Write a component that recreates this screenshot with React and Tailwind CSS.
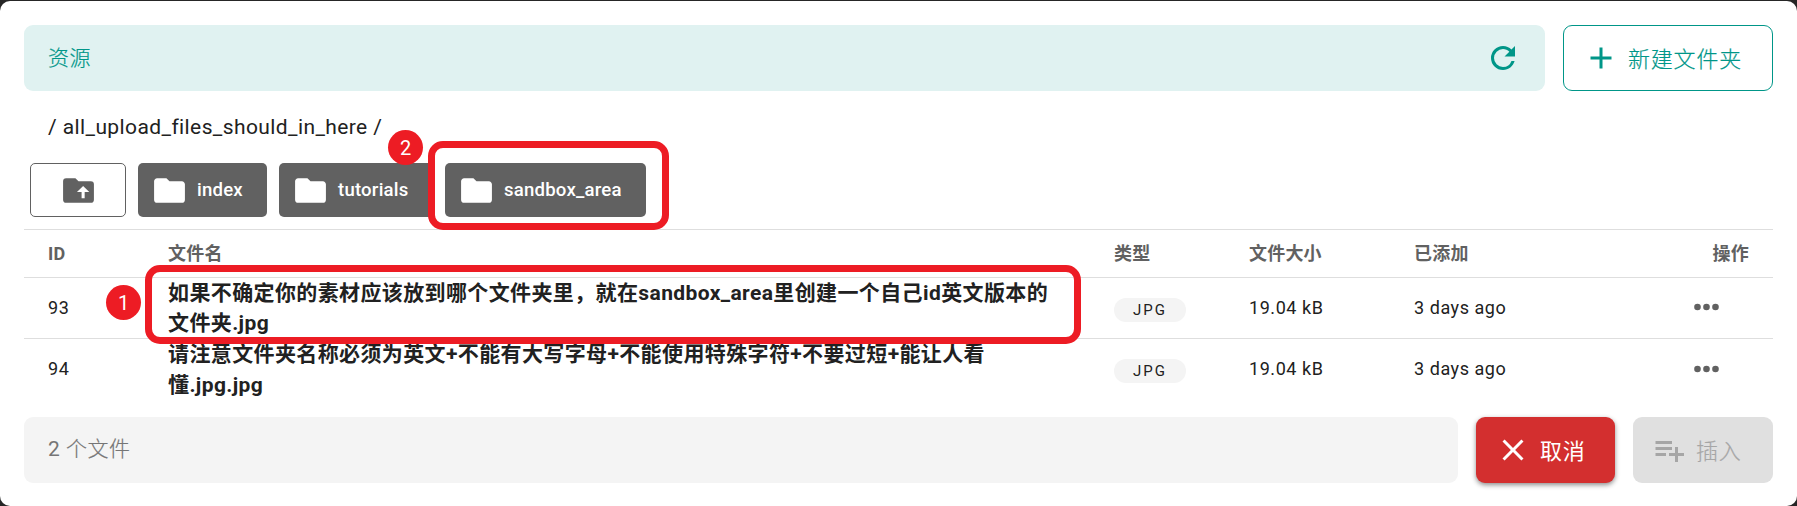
import React from "react";

const FolderIcon = () => (
  <svg className="size-[37px] shrink-0" viewBox="0 0 24 24" fill="currentColor">
    <path d="M10 4H4c-1.110 0-2 .89-2 2v12a2 2 0 0 0 2 2h16a2 2 0 0 0 2-2V8c0-1.110-.9-2-2-2h-8l-2-2Z" />
  </svg>
);

const Folder = ({ name, className }) => (
  <button className={`flex h-[54px] items-center gap-[9px] rounded-[5px] bg-[#616161] pl-[13px] text-[18.6px] font-medium tracking-[0.2px] text-white ${className}`}>
    <FolderIcon />
    <span className="pt-[2px] whitespace-nowrap">{name}</span>
  </button>
);

const COLS = "grid grid-cols-[120px_946px_135px_165px_1fr] pl-6";

const files = [
  { id: 93, lines: ["如果不确定你的素材应该放到哪个文件夹里，就在sandbox_area里创建一个自己id英文版本的", "文件夹.jpg"] },
  { id: 94, lines: ["请注意文件夹名称必须为英文+不能有大写字母+不能使用特殊字符+不要过短+能让人看", "懂.jpg.jpg"] },
];

const Row = ({ file, className }) => (
  <div className={`${COLS} h-[61px] items-center text-[18px] tracking-[0.55px] text-[#212121] ${className}`}>
    <span className="pb-[2px]">{file.id}</span>
    <div className="text-[21px] leading-[30.4px] font-bold tracking-[0.38px] whitespace-nowrap">
      {file.lines.map((l) => (
        <div key={l}>{l}</div>
      ))}
    </div>
    <span className="mt-[3px] flex h-6 w-[72px] items-center justify-center rounded-full bg-[#f4f4f4] text-[15px] tracking-[2px]">JPG</span>
    <span className="pb-[2px]">19.04 kB</span>
    <span className="flex items-center justify-between pr-[54px] pb-[2px]">
      3 days ago
      <svg className="h-[8px] w-[25px]" viewBox="0 0 25 8" fill="#616161">
        <circle cx="3.500" cy="4" r="3.300" />
        <circle cx="12.500" cy="4" r="3.300" />
        <circle cx="21.500" cy="4" r="3.300" />
      </svg>
    </span>
  </div>
);

export default function App() {
  return (
    <div className="h-[506px] w-[1797px] overflow-hidden bg-[#262626] pt-px font-['Roboto','Noto_Sans_CJK_SC',sans-serif]">
      <main className="relative flex h-[505px] flex-col rounded-[10px] bg-white px-6 pt-6">
        <header className="flex h-[66px] shrink-0 gap-[18px]">
          <div className="flex w-[1521px] items-center justify-between rounded-[9px] bg-[#e0f2f1] px-6 text-[21px] text-[#009688]">
            <span className="pt-px font-light tracking-[0.4px] [-webkit-text-stroke:0.2px]">资源</span>
            <svg className="size-9" viewBox="0 0 24 24" fill="currentColor">
              <path d="M17.650 6.350A7.958 7.958 0 0 0 12 4a8 8 0 0 0-8 8 8 8 0 0 0 8 8c3.730 0 6.840-2.550 7.730-6h-2.080A5.990 5.990 0 0 1 12 18a6 6 0 0 1-6-6 6 6 0 0 1 6-6c1.660 0 3.140.69 4.220 1.780L13 11h7V4l-2.350 2.350Z" />
            </svg>
          </div>
          <button className="flex w-[210px] items-center gap-[9px] rounded-[9px] border border-[#009688] pl-[19px] text-[22px] tracking-[0.8px] text-[#009688]">
            <svg className="size-9" viewBox="0 0 24 24" fill="currentColor">
              <path d="M19 13h-6v6h-2v-6H5v-2h6V5h2v6h6v2Z" />
            </svg>
            <span className="pt-[3px] font-light whitespace-nowrap [-webkit-text-stroke:0.2px]">新建文件夹</span>
          </button>
        </header>

        <div className="flex h-[72px] shrink-0 items-center pt-[2px] pl-6 text-[21px] tracking-[0.4px] text-[#212121]">/ all_upload_files_should_in_here /</div>

        <nav className="flex h-[54px] shrink-0 gap-3 pl-[6px]">
          <button className="flex w-24 items-center justify-center rounded-[5px] border border-[#616161] text-[#616161]">
            <svg className="size-[37px]" viewBox="0 0 24 24" fill="currentColor">
              <path d="M20 6h-8l-2-2H4a2 2 0 0 0-2 2v12a2 2 0 0 0 2 2h16a2 2 0 0 0 2-2V8a2 2 0 0 0-2-2Zm-4 7v4h-2v-4h-3l4-4 4 4h-3Z" />
            </svg>
          </button>
          <Folder name="index" className="w-[129px]" />
          <Folder name="tutorials" className="w-[154px]" />
          <Folder name="sandbox_area" className="w-[201px]" />
        </nav>

        <section className="mt-3 shrink-0 border-t border-[#dedede]">
          <div className={`${COLS} h-12 items-center border-b border-[#dedede] text-[18px] font-bold tracking-[0.2px] text-[#616161]`}>
            <span className="pb-px">ID</span>
            <span>文件名</span>
            <span>类型</span>
            <span>文件大小</span>
            <span className="flex justify-between pr-6">
              <span>已添加</span>
              <span>操作</span>
            </span>
          </div>
          <Row file={files[0]} className="border-b border-[#dedede]" />
          <Row file={files[1]} className="" />
        </section>

        <footer className="mt-[17px] flex h-[66px] shrink-0 gap-[18px]">
          <div className="flex w-[1434px] items-center rounded-[9px] bg-[#f4f4f4] pl-6 text-[21px] tracking-[0.5px] text-[#757575]">
            <span className="whitespace-pre">2 </span>
            <span className="font-light [-webkit-text-stroke:0.2px]">个文件</span>
          </div>
          <button className="flex w-[139px] items-center gap-[9px] rounded-[9px] bg-[#d32f2f] pl-[19px] text-[22px] tracking-[0.8px] text-white shadow-[0_2px_5px_rgba(0,0,0,0.45)]">
            <svg className="size-9" viewBox="0 0 24 24" fill="currentColor">
              <path d="M19 6.410 17.590 5 12 10.590 6.410 5 5 6.410 10.590 12 5 17.590 6.410 19 12 13.410 17.590 19 19 17.590 13.410 12 19 6.410Z" />
            </svg>
            <span className="pt-[3px] whitespace-nowrap">取消</span>
          </button>
          <button className="flex w-[140px] items-center gap-[9px] rounded-[9px] bg-[#e0e0e0] pl-[18px] text-[22px] tracking-[0.8px] text-[#a6a6a6]">
            <svg className="size-9" viewBox="0 0 24 24" fill="currentColor">
              <path d="M3 16h7v-2H3m15 0v-4h-2v4h-4v2h4v4h2v-4h4v-2M14 6H3v2h11m0 2H3v2h11v-2Z" />
            </svg>
            <span className="pt-[3px] font-light whitespace-nowrap [-webkit-text-stroke:0.2px]">插入</span>
          </button>
        </footer>

        <div className="absolute top-[140px] left-[428px] h-[89px] w-[241px] rounded-[15px] border-[7px] border-[#ed1c24]" />
        <div className="absolute top-[264px] left-[145px] h-[79px] w-[936px] rounded-[15px] border-[7px] border-[#ed1c24]" />
        <div className="absolute top-[129px] left-[388px] flex size-[35px] items-center justify-center rounded-full bg-[#ed1c24] text-[20px] text-white">2</div>
        <div className="absolute top-[284px] left-[106px] flex size-[35px] items-center justify-center rounded-full bg-[#ed1c24] text-[20px] text-white">1</div>
      </main>
    </div>
  );
}
